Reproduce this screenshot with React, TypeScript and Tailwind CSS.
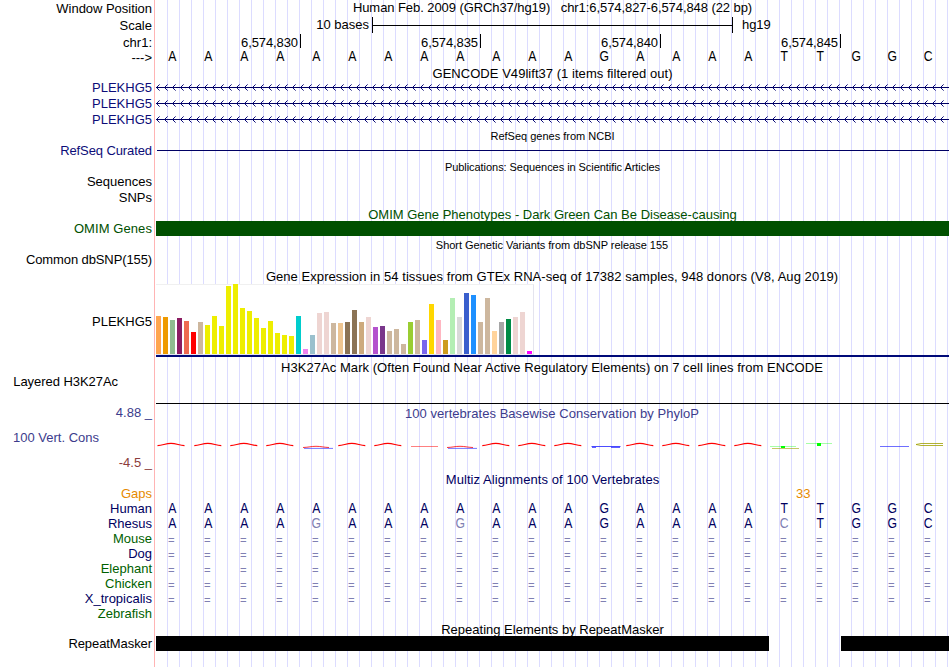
import React from 'react';

type RowProps = {
  h: string;
  label?: string;
  labelClass?: string;
  trackClass?: string;
  children?: React.ReactNode;
};

// One horizontal band: a right-aligned label, the pink divider and the 793px data track.
function Row({ h, label = '', labelClass = '', trackClass = '', children }: RowProps) {
  return (
    <div className={`flex shrink-0 ${h}`}>
      <div className={`w-[155px] shrink-0 whitespace-pre border-r border-[#ffb4b4] text-right ${labelClass}`}>
        <span className="pr-[2px]">{label}</span>
      </div>
      <div className={`ml-px w-[793px] shrink-0 whitespace-pre ${trackClass}`}>{children}</div>
    </div>
  );
}

function Bases({ seq, ref0, className = 'text-[14px]' }: { seq: string; ref0?: string; className?: string }) {
  return (
    <div className={`flex ${className}`}>
      {seq.split('').map((b, i) => (
        <span
          key={i}
          className={`w-[36px] shrink-0 scale-x-[0.87] pr-[4px] text-center ${ref0 && ref0[i] !== b ? 'text-[#8080b3]' : ''}`}
        >
          {b}
        </span>
      ))}
    </div>
  );
}

const HUMAN = 'AAAAAAAAAAAAGAAAATTGGC';
const RHESUS = 'AAAAGAAAGAAAGAAAACTGGC';
const NAVY = 'text-[#00005f]';
const GREEN = 'text-[#005f00]';

const SPECIES = [
  { name: 'Mouse', color: GREEN },
  { name: 'Dog', color: NAVY },
  { name: 'Elephant', color: GREEN },
  { name: 'Chicken', color: GREEN },
  { name: 'X_tropicalis', color: NAVY },
];

function GeneLine() {
  return (
    <svg width="793" height="16" className="block" shapeRendering="crispEdges">
      <rect x="0" y="7" width="793" height="1" fill="#000064" />
      {Array.from({ length: 99 }, (_, k) => 8 * k).map((x) => (
        <g key={x} fill="#0c0c78">
          <rect x={x + 1} y="6" width="1" height="1" />
          <rect x={x + 1} y="8" width="1" height="1" />
          <rect x={x + 2} y="5" width="1" height="1" />
          <rect x={x + 2} y="9" width="1" height="1" />
          <rect x={x + 3} y="4" width="1" height="1" opacity="0.6" />
          <rect x={x + 3} y="10" width="1" height="1" opacity="0.6" />
        </g>
      ))}
    </svg>
  );
}

const TISSUES: [number, string][] = [
  [38, '#ffa54f'], [37, '#ee9a00'], [34, '#8fbc8f'], [36, '#8b1c62'], [33, '#ee6a50'], [22, '#ff0000'], [32, '#cdb79e'],
  [29, '#eeee00'], [38, '#eeee00'], [28, '#eeee00'], [68, '#eeee00'], [70, '#eeee00'], [46, '#eeee00'], [43, '#eeee00'],
  [36, '#eeee00'], [26, '#eeee00'], [33, '#eeee00'], [21, '#eeee00'], [19, '#eeee00'], [18, '#eeee00'],
  [38, '#00cdcd'], [5, '#ee82ee'], [19, '#9ac0cd'], [41, '#eed5d2'], [42, '#eed5d2'], [31, '#cdb79e'], [31, '#eec591'],
  [32, '#8b7355'], [44, '#8b7355'], [32, '#cdaa7d'], [37, '#eed5d2'], [27, '#b452cd'], [28, '#7a378b'], [23, '#cdb79e'],
  [25, '#cdb79e'], [10, '#cdb79e'], [32, '#9acd32'], [34, '#cdb79e'], [14, '#7a67ee'], [50, '#ffd700'], [34, '#ffb6c1'],
  [14, '#cd9b1d'], [56, '#b4eeb4'], [37, '#d9d9d9'], [61, '#3a5fcd'], [59, '#1e90ff'], [32, '#cdb79e'], [56, '#cdb79e'],
  [23, '#ffd39b'], [32, '#a6a6a6'], [35, '#008b45'], [37, '#eed5d2'], [42, '#eed5d2'], [3, '#ff00ff'],
];

function Expression() {
  return (
    <div className="flex h-[73px] flex-col border-b-2 border-[#000a78]">
      <div className="flex h-[71px] w-[378px] items-end gap-[2px] border-b border-r border-t border-[#e4e4ee] border-t-[#f0f0f0] bg-white">
        {TISSUES.map(([v, c], i) => (
          <div key={i} className="w-[5px] shrink-0" style={{ height: v, backgroundColor: c }} />
        ))}
      </div>
    </div>
  );
}

// Conservation logo, squeezed to a few pixels in height.
function PhyloP() {
  const arcs = [0, 1, 2, 3, 5, 6, 9, 10, 11, 13, 14, 15, 16];
  return (
    <svg width="793" height="12" className="block" fill="none">
      {arcs.map((i) => (
        <path
          key={i}
          transform={`translate(${i * 36 + (i ? 0.8 : 0)} 0)`}
          d="M1.5 5.6 C7 5.3 9.5 3.4 15 3.4 C20.5 3.4 23 5.3 28.5 5.6"
          stroke="#ff0000"
          strokeWidth="1.15"
        />
      ))}
      {[4, 8].map((i) => (
        <g key={i} transform={`translate(${i * 36} 0)`}>
          <path d="M3 7.5 C9 7.3 11 6.3 16 6.3 C21 6.3 23 7.3 29 7.5" stroke="#ff0000" strokeWidth="0.8" />
          <path d="M4 8.4 H33" stroke="#3c3cff" strokeWidth="0.7" />
        </g>
      ))}
      <path d="M255 6.5 H282" stroke="#ff0000" strokeWidth="0.5" />
      <path d="M435.5 6.5 H464.5 M436 7.4 H440 M455 7.4 H464" stroke="#2020ff" strokeWidth="0.8" />
      <path d="M614 6.5 H640" stroke="#00ff00" strokeWidth="0.35" />
      <path d="M616 8.5 H643" stroke="#a0a000" strokeWidth="0.6" />
      <rect x="625" y="6" width="4" height="2" fill="#00ff00" />
      <path d="M650 3.5 H676" stroke="#00ff00" strokeWidth="0.35" />
      <rect x="661" y="3" width="4" height="3" fill="#00ff00" />
      <path d="M724 6.5 H753" stroke="#2020ff" strokeWidth="0.65" />
      <path d="M787 3.5 H765 L760 4.5 L765 5.5 H787" stroke="#a0a000" strokeWidth="0.8" />
    </svg>
  );
}

function Tick({ text, w = 'w-[180px]' }: { text: string; w?: string }) {
  return (
    <div className={`flex h-[14px] shrink-0 justify-end border-r border-black pr-[2px] tracking-[-0.1px] ${w}`}>
      <span className="pt-px">{text}</span>
    </div>
  );
}

export default function App() {
  const dashes = '='.repeat(22);
  return (
    <div className="h-[667px] w-[950px] overflow-hidden bg-white">
      <div className="flex h-[667px] w-[950px] flex-col bg-[repeating-linear-gradient(90deg,#dcdcff_0px,#dcdcff_1px,transparent_1px,transparent_12px)] bg-[length:782px_100%] bg-[position:167px_0px] bg-no-repeat font-['Liberation_Sans',Arial,sans-serif] text-[13px] leading-[15px] text-black">
        <Row h="h-[16px]" label="Window Position" labelClass="pt-px tracking-[-0.03px]" trackClass="text-center tracking-[-0.075px]">
          {'Human Feb. 2009 (GRCh37/hg19)   chr1:6,574,827-6,574,848 (22 bp)'}
        </Row>
        <Row h="h-[18px]" label="Scale" labelClass="pt-[2px]" trackClass="flex">
          <div className="w-[216px] pr-[3px] pt-px text-right">10 bases</div>
          <div className="mt-px flex h-[16px] w-[361px] items-center border-x border-black">
            <div className="h-px w-full bg-black" />
          </div>
          <div className="pl-[9px] pt-px tracking-[-0.1px]">hg19</div>
        </Row>
        <Row h="h-[15px]" label="chr1:" labelClass="pt-px" trackClass="flex">
          <Tick text="6,574,830" w="w-[145px]" />
          <Tick text="6,574,835" />
          <Tick text="6,574,840" />
          <Tick text="6,574,845" />
        </Row>
        <Row h="h-[17px]" label="--->" labelClass="pt-px">
          <Bases seq={HUMAN} />
        </Row>
        <Row h="h-[14px]" trackClass="text-center tracking-[0.04px]">GENCODE V49lift37 (1 items filtered out)</Row>
        {[0, 1, 2].map((i) => (
          <Row key={i} h="h-[16px]" label="PLEKHG5" labelClass="text-[#0c0c78]">
            <GeneLine />
          </Row>
        ))}
        <Row h="h-[15px]" trackClass="pt-px text-center text-[11px]">RefSeq genes from NCBI</Row>
        <Row h="h-[17px]" label="RefSeq Curated" labelClass="text-[#0c0c78] tracking-[-0.1px]" trackClass="pl-px pt-[7px]">
          <div className="h-px bg-[#000064]" />
        </Row>
        <Row h="h-[14px]" trackClass="text-center text-[11px] tracking-[-0.055px]">Publications: Sequences in Scientific Articles</Row>
        <Row h="h-[16px]" label="Sequences" />
        <Row h="h-[16px]" label="SNPs" />
        <Row h="h-[15px]" trackClass="pt-px text-center text-[#005000]">OMIM Gene Phenotypes - Dark Green Can Be Disease-causing</Row>
        <Row h="h-[16px]" label="OMIM Genes" labelClass="text-[#005000] tracking-[0.08px]">
          <div className="h-[15px] bg-[#005000]" />
        </Row>
        <Row h="h-[15px]" trackClass="pt-px pr-px text-center text-[11px] tracking-[-0.02px]">Short Genetic Variants from dbSNP release 155</Row>
        <Row h="h-[17px]" label="Common dbSNP(155)" labelClass="tracking-[-0.11px]" />
        <Row h="h-[15px]" trackClass="pr-px text-center tracking-[0.055px]">
          Gene Expression in 54 tissues from GTEx RNA-seq of 17382 samples, 948 donors (V8, Aug 2019)
        </Row>
        <Row h="h-[76px]" label="PLEKHG5" labelClass="pt-[30px]">
          <Expression />
        </Row>
        <Row h="h-[14px]" trackClass="pr-px text-center tracking-[0.05px]">
          H3K27Ac Mark (Often Found Near Active Regulatory Elements) on 7 cell lines from ENCODE
        </Row>
        <Row h="h-[31px]" label="Layered H3K27Ac" labelClass="pr-[34px] tracking-[-0.05px]" trackClass="pt-[29px]">
          <div className="h-px bg-black" />
        </Row>
        <Row h="h-[25px]" label="4.88 _" labelClass="text-[#3c3c8c]" trackClass="pr-px pt-px text-center text-[#3c3c8c] tracking-[0.045px]">
          100 vertebrates Basewise Conservation by PhyloP
        </Row>
        <Row h="h-[25px]" label="100 Vert. Cons" labelClass="pr-[53px] text-[#3c3c8c]" trackClass="pt-[10px]">
          <PhyloP />
        </Row>
        <Row h="h-[17px]" label="-4.5 _" labelClass="text-[#8c3c3c]" />
        <Row h="h-[14px]" trackClass={`text-center tracking-[0.07px] ${NAVY}`}>Multiz Alignments of 100 Vertebrates</Row>
        <Row h="h-[15px]" label="Gaps" labelClass="text-[#e68a00]" trackClass="pl-[640px] text-[#e68a00]">33</Row>
        <Row h="h-[15px]" label="Human" labelClass={NAVY} trackClass={NAVY}>
          <Bases seq={HUMAN} />
        </Row>
        <Row h="h-[15px]" label="Rhesus" labelClass={NAVY} trackClass={NAVY}>
          <Bases seq={RHESUS} ref0={HUMAN} />
        </Row>
        {SPECIES.map(({ name, color }) => (
          <Row key={name} h="h-[15px]" label={name} labelClass={color} trackClass="pt-px">
            <Bases seq={dashes} ref0={HUMAN} className="-ml-px text-[13px]" />
          </Row>
        ))}
        <Row h="h-[16px]" label="Zebrafish" labelClass={GREEN} />
        <Row h="h-[14px]" trackClass="text-center">Repeating Elements by RepeatMasker</Row>
        <Row h="h-[31px]" label="RepeatMasker" labelClass="tracking-[-0.08px]" trackClass="flex gap-[72px]">
          <div className="h-[15px] w-[613px] bg-black" />
          <div className="h-[15px] w-[108px] bg-black" />
        </Row>
      </div>
    </div>
  );
}
